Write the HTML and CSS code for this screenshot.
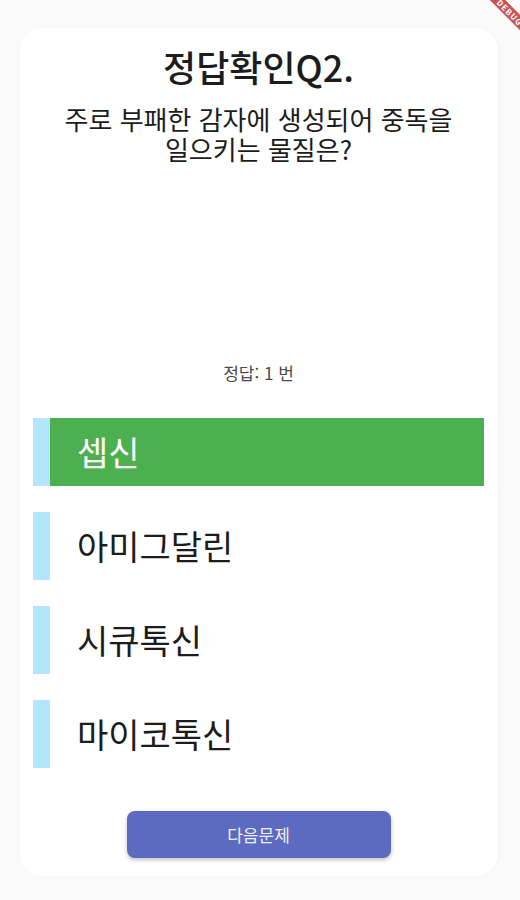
FILE: index.html
```html
<!DOCTYPE html>
<html lang="ko">
	<head>
		<meta charset="UTF-8">
		<title>정답확인</title>
		<link rel="stylesheet" href="styles.css">
	</head>
	<body>
		<div class="corner"><div class="debug-banner">DEBUG</div></div>
		<div id="card">
			<div class="title">정답확인Q2.</div>
			<div class="question">주로 부패한 감자에 생성되어 중독을<br/>일으키는 물질은?</div>
			<div class="answer">정답: 1 번</div>
			<div class="options">
				<div class="option correct"><span class="mark"></span><span class="label">셉신</span></div>
				<div class="option"><span class="mark"></span><span class="label">아미그달린</span></div>
				<div class="option"><span class="mark"></span><span class="label">시큐톡신</span></div>
				<div class="option"><span class="mark"></span><span class="label">마이코톡신</span></div>
			</div>
			<button class="next">다음문제</button>
		</div>
	</body>
</html>
```

FILE: styles.css
```css
body {
	margin: 0;
	background-color: #fafafa;
	font-family: "Noto Sans CJK KR", "Noto Sans", sans-serif;
	color: #1c1c1c;
	overflow: hidden;
	height: 900px;
	position: relative;
}
#card {
	margin: 28px 22px 0 20px;
	height: 848px;
	box-sizing: border-box;
	padding: 18px 14px 18px 13px;
	background-color: #ffffff;
	border-radius: 22px;
	box-shadow: 0 0 6px rgba(0, 0, 0, 0.03);
	display: flex;
	flex-direction: column;
}
.title {
	text-align: center;
	font-size: 36px;
	font-weight: 500;
	line-height: 40px;
}
.question {
	margin-top: 18px;
	text-align: center;
	font-size: 26px;
	line-height: 30px;
}
.answer {
	margin-top: 199px;
	text-align: center;
	font-size: 17px;
	line-height: 20px;
	color: #4a4a4a;
}
.options {
	margin-top: 35px;
	display: flex;
	flex-direction: column;
	gap: 26px;
}
.option {
	height: 68px;
	display: flex;
	align-items: center;
}
.mark {
	width: 17px;
	align-self: stretch;
	background-color: #b3e5fc;
}
.label {
	padding-left: 27px;
	font-size: 34px;
	line-height: 40px;
}
.option.correct {
	background-color: #4caf50;
}
.option.correct .label {
	color: #ffffff;
}
.next {
	margin: 43px auto 0;
	width: 264px;
	height: 47px;
	border: none;
	border-radius: 8px;
	background-color: #5c6bc0;
	color: #eef0fa;
	font-family: inherit;
	font-size: 17px;
	box-shadow: 0 2px 4px rgba(0, 0, 0, 0.25);
}
.corner {
	position: absolute;
	top: 0;
	right: 0;
	width: 40px;
	height: 40px;
	overflow: hidden;
}
.debug-banner {
	position: absolute;
	left: -20px;
	top: 7px;
	width: 100px;
	height: 11px;
	line-height: 11px;
	transform: rotate(45deg);
	background-color: rgba(183, 28, 28, 0.75);
	color: #ffffff;
	font-size: 8px;
	font-weight: bold;
	text-align: center;
	letter-spacing: 1px;
}
```
